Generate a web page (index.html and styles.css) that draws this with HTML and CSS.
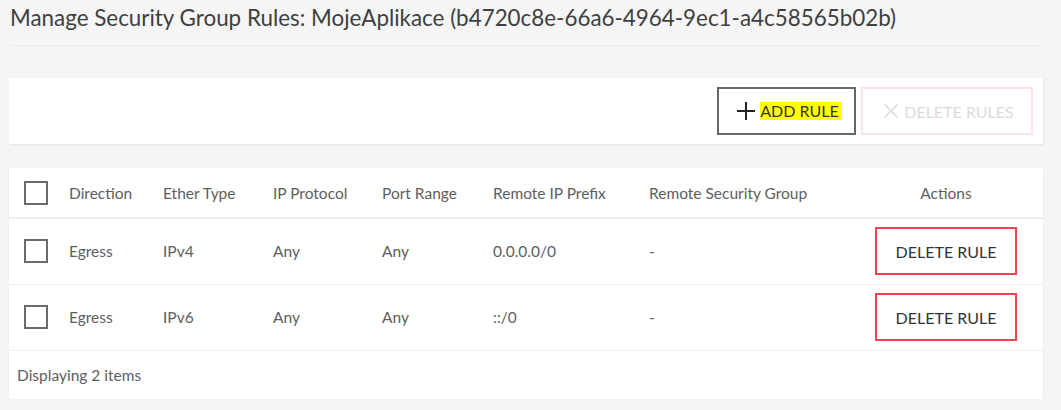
FILE: index.html
```html
<!DOCTYPE html>
<html>
<head>
<meta charset="utf-8">
<link rel="stylesheet" href="styles.css">
</head>
<body>
<div class="page">
  <h1 class="title">Manage Security Group Rules: MojeAplikace (b4720c8e-66a6-4964-9ec1-a4c58565b02b)</h1>
  <div class="toolbar">
    <button class="btn btn-add">
      <svg class="icon" width="18" height="18" viewBox="0 0 18 18"><path d="M9 0V18M0 9H18" stroke="#222" stroke-width="2" fill="none"/></svg>
      <span class="hl">ADD RULE</span>
    </button>
    <button class="btn btn-del-all">
      <svg class="icon" width="14" height="14" viewBox="0 0 14 14"><path d="M0.5 0.5L13.5 13.5M13.5 0.5L0.5 13.5" stroke="#dcdcdc" stroke-width="1.5" fill="none"/></svg>
      <span>DELETE RULES</span>
    </button>
  </div>
  <div class="card">
    <table class="rules">
      <colgroup>
        <col class="c-check"><col class="c-dir"><col class="c-eth"><col class="c-proto"><col class="c-port"><col class="c-prefix"><col class="c-group"><col class="c-actions">
      </colgroup>
      <thead>
        <tr>
          <th class="check"><span class="box"></span></th>
          <th>Direction</th>
          <th>Ether Type</th>
          <th>IP Protocol</th>
          <th>Port Range</th>
          <th>Remote IP Prefix</th>
          <th>Remote Security Group</th>
          <th class="actions">Actions</th>
        </tr>
      </thead>
      <tbody>
        <tr>
          <td class="check"><span class="box"></span></td>
          <td>Egress</td>
          <td>IPv4</td>
          <td>Any</td>
          <td>Any</td>
          <td>0.0.0.0/0</td>
          <td>-</td>
          <td class="actions"><button class="btn btn-del">DELETE RULE</button></td>
        </tr>
        <tr>
          <td class="check"><span class="box"></span></td>
          <td>Egress</td>
          <td>IPv6</td>
          <td>Any</td>
          <td>Any</td>
          <td>::/0</td>
          <td>-</td>
          <td class="actions"><button class="btn btn-del">DELETE RULE</button></td>
        </tr>
      </tbody>
    </table>
    <div class="footer">Displaying 2 items</div>
  </div>
</div>
</body>
</html>
```

FILE: styles.css
```css
* { box-sizing: border-box; }
html, body {
  margin: 0;
  padding: 0;
  background: #f5f5f5;
  font-family: Lato, "Noto Sans", sans-serif;
  color: #555;
}
.page {
  padding: 0 18px 0 9px;
}
.title {
  margin: 0;
  padding: 4px 0 0 1px;
  height: 46px;
  font-size: 22.4px;
  font-weight: 400;
  line-height: 27px;
  color: #3f3f3f;
  border-bottom: 1px solid #ebebeb;
  white-space: nowrap;
}
.toolbar {
  margin-top: 32px;
  height: 66px;
  background: #fff;
  box-shadow: 1px 1px 2px rgba(0,0,0,0.07);
  display: flex;
  justify-content: flex-end;
  align-items: flex-start;
  gap: 5px;
  padding: 9px 10px 0 0;
}
.btn {
  height: 48px;
  font-family: inherit;
  font-size: 16px;
  background: #fff;
  display: inline-flex;
  align-items: center;
  justify-content: center;
  white-space: nowrap;
  cursor: pointer;
}
.btn-add {
  width: 139px;
  border: 2px solid #666;
  padding: 0 10px 0 16px;
  gap: 5px;
  color: #333;
}
.hl {
  background: #ffff00;
  padding: 0 3px 0 0;
  line-height: 18px;
}
.btn-del-all {
  width: 172px;
  border: 2px solid #fde3e5;
  color: #dcdcdc;
  gap: 6px;
  padding: 0 0 0 4px;
}
.card {
  margin-top: 24px;
  background: #fff;
  box-shadow: 0 0 2px rgba(0,0,0,0.06);
}
.rules {
  width: 100%;
  border-collapse: collapse;
  table-layout: fixed;
}
.c-check { width: 48px; }
.c-dir { width: 94px; }
.c-eth { width: 110px; }
.c-proto { width: 109px; }
.c-port { width: 111px; }
.c-prefix { width: 156px; }
.c-group { width: 212px; }
.c-actions { width: 194px; }
.rules th, .rules td {
  text-align: left;
  font-weight: 400;
  font-size: 15.5px;
  color: #5e5e5e;
  padding: 0 12px;
  vertical-align: middle;
}
.rules thead tr {
  height: 50px;
  border-bottom: 2px solid #efefef;
}
.rules tbody tr {
  height: 66px;
  border-bottom: 1px solid #efefef;
}
.rules .check { padding: 0 0 0 15px; }
.rules .actions { text-align: center; padding: 0; }
.box {
  display: block;
  width: 24px;
  height: 24px;
  border: 2px solid #6b6b6b;
}
.btn-del {
  width: 142px;
  border: 2px solid #f0434f;
  color: #333;
  padding: 0;
  vertical-align: middle;
}
.footer {
  height: 48px;
  padding: 0 0 0 8px;
  display: flex;
  align-items: center;
  font-size: 15.5px;
  color: #5e5e5e;
}
```
